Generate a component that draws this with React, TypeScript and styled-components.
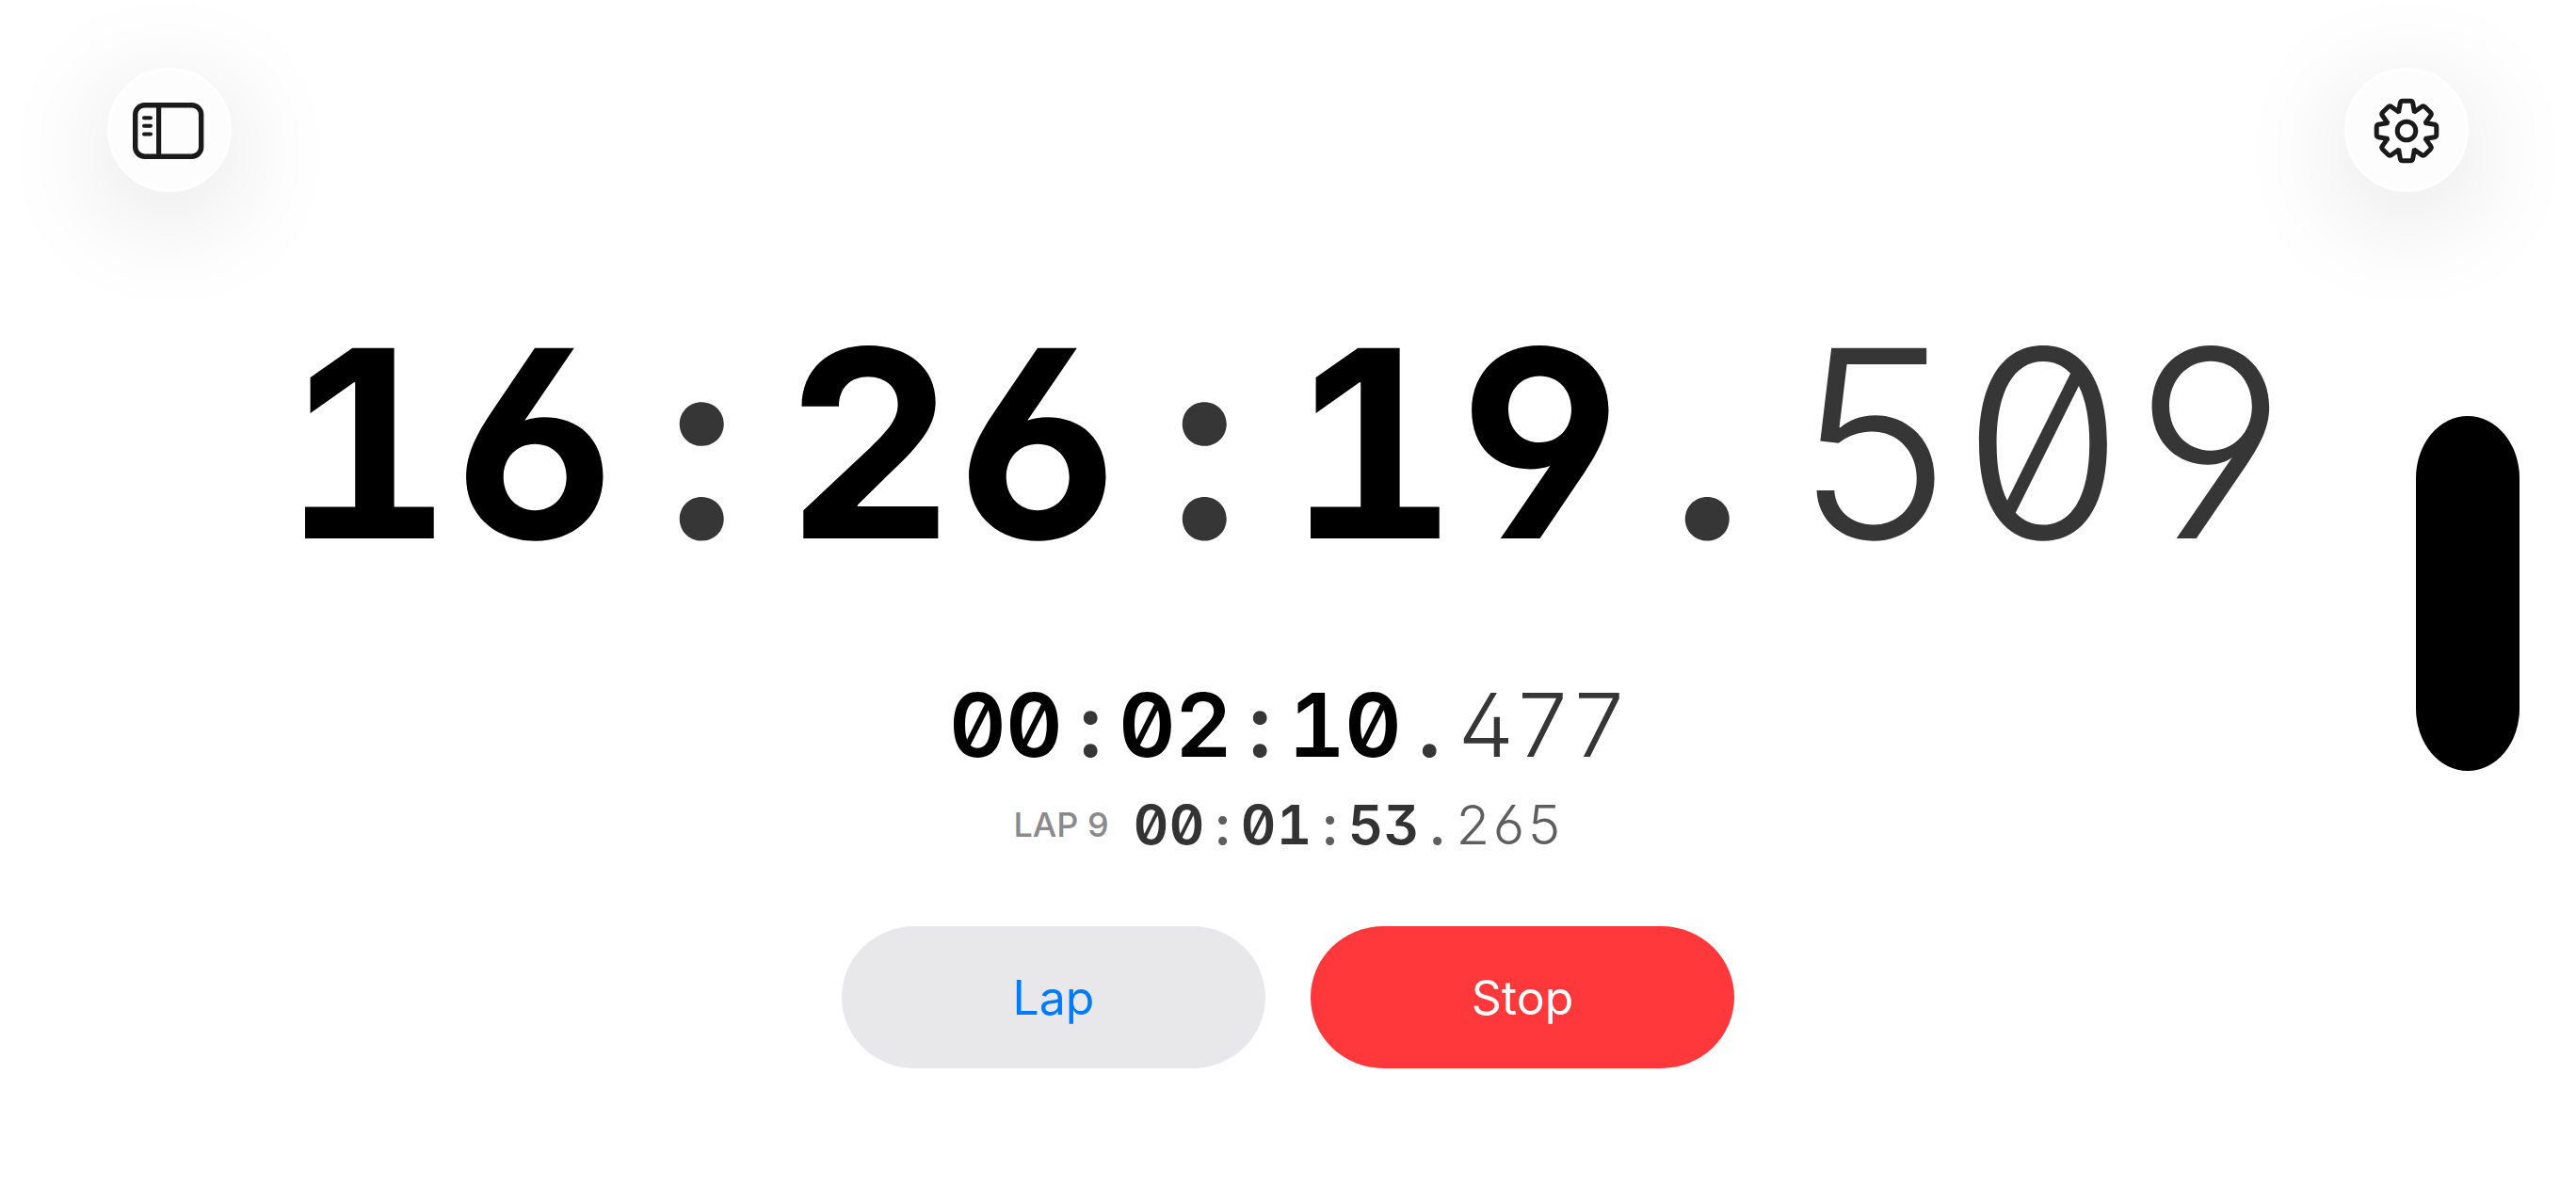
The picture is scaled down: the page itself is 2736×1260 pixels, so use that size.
import React from "react";
import styled, { createGlobalStyle } from "styled-components";

const GlobalStyle = createGlobalStyle`
  *, *::before, *::after { box-sizing: border-box; }
  body {
    margin: 0;
    background: #ffffff;
    font-family: Inter, "Liberation Sans", sans-serif;
  }
`;

const Page = styled.div`
  position: relative;
  display: flex;
  flex-direction: column;
  min-height: 100vh;
  overflow: hidden;
`;

const Toolbar = styled.header`
  display: flex;
  justify-content: space-between;
  padding: 72px 114px 0;
`;

const RoundButton = styled.button`
  display: flex;
  align-items: center;
  justify-content: center;
  width: 132px;
  height: 132px;
  padding: 0;
  border: 3px solid #ffffff;
  border-radius: 50%;
  background: #fdfdfd;
  color: #1a1a1a;
  box-shadow: 0 24px 120px rgba(0, 0, 0, 0.13);
  cursor: pointer;
`;

const Icon = styled.svg`
  flex: none;
  width: 100px;
  height: 100px;
  fill: none;
  stroke: currentColor;
  stroke-linecap: round;
  stroke-linejoin: round;
`;

const Main = styled.main`
  display: flex;
  flex-direction: column;
  align-items: center;
  padding: 127px 24px 0;
`;

const sizes = {
  large: { cell: 178, font: 278, line: 280, weight: 700 },
  medium: { cell: 60, font: 94, line: 96, weight: 600 },
  small: { cell: 38, font: 58, line: 64, weight: 600 },
};

type Size = keyof typeof sizes;

const Readout = styled.div<{ $size: Size; $color: string }>`
  display: grid;
  grid-auto-flow: column;
  grid-auto-columns: ${(p) => sizes[p.$size].cell}px;
  font-size: ${(p) => sizes[p.$size].font}px;
  line-height: ${(p) => sizes[p.$size].line}px;
  font-weight: ${(p) => sizes[p.$size].weight};
  font-feature-settings: "tnum", "zero", "ss01";
  text-align: center;
  color: ${(p) => p.$color};
`;

const Glyph = styled.span<{ $faint: boolean; $light: boolean; $faintColor: string }>`
  font-weight: ${(p) => (p.$light ? 300 : "inherit")};
  color: ${(p) => (p.$faint ? p.$faintColor : "inherit")};
`;

const Elapsed = styled.section`
  margin-top: 111px;
`;

const LapRow = styled.section`
  display: flex;
  align-items: center;
  gap: 26px;
  margin-top: 26px;
`;

const LapLabel = styled.span`
  font-size: 36px;
  line-height: 64px;
  font-weight: 500;
  color: #8a8a8e;
`;

const Actions = styled.div`
  display: flex;
  gap: 48px;
  margin-top: 76px;
`;

const ActionButton = styled.button<{ $bg: string; $fg: string }>`
  width: 450px;
  height: 151px;
  padding: 0;
  border: 0;
  border-radius: 78px / 76px;
  background: ${(p) => p.$bg};
  color: ${(p) => p.$fg};
  font-family: inherit;
  font-size: 50px;
  line-height: 60px;
  font-weight: 400;
  cursor: pointer;
`;

const CameraIsland = styled.div`
  position: absolute;
  top: 0;
  bottom: 0;
  right: 60px;
  width: 110px;
  height: 377px;
  margin: auto 0;
  border-radius: 55px / 66px;
  background: #000000;
`;

function Time({ value, size, color, faint }: { value: string; size: Size; color: string; faint: string }) {
  const dot = value.indexOf(".");
  return (
    <Readout $size={size} $color={color} role="timer" aria-label={value}>
      {value.split("").map((ch, i) => (
        <Glyph key={i} $light={i > dot} $faint={i > dot || ch === ":" || ch === "."} $faintColor={faint}>
          {ch}
        </Glyph>
      ))}
    </Readout>
  );
}

function SidebarIcon() {
  return (
    <Icon viewBox="0 0 100 100" aria-hidden="true">
      <rect x="13.7" y="23.7" width="70" height="54.5" rx="10" strokeWidth="5.4" />
      <path d="M38.6 24V78" strokeWidth="5.2" strokeLinecap="butt" />
      <path d="M23 37.2h7M23 45.8h7M23 54.4h7" strokeWidth="4" />
    </Icon>
  );
}

function gearPath() {
  const points: string[] = [];
  const tooth = [
    [-8.2, -20.8],
    [-6.7, -29.6],
    [-6.3, -31.8],
    [-4, -31.8],
    [4, -31.8],
    [6.3, -31.8],
    [6.7, -29.6],
    [8.2, -20.8],
  ];
  for (let k = 0; k < 8; k++) {
    const a = (k * Math.PI) / 4;
    const p = tooth.map(([x, y]) => {
      const rx = x * Math.cos(a) - y * Math.sin(a);
      const ry = x * Math.sin(a) + y * Math.cos(a);
      return `${rx.toFixed(2)} ${ry.toFixed(2)}`;
    });
    points.push(`${k === 0 ? "M" : "L"}${p[0]}L${p[1]}Q${p[2]} ${p[3]}L${p[4]}Q${p[5]} ${p[6]}L${p[7]}`);
  }
  return points.join("") + "Z";
}

function GearIcon() {
  return (
    <Icon viewBox="-50 -51 100 100" aria-hidden="true">
      <path d={gearPath()} strokeWidth="5" strokeLinejoin="miter" />
      <circle r="9.8" strokeWidth="5" />
    </Icon>
  );
}

export default function App() {
  return (
    <Page>
      <GlobalStyle />
      <Toolbar>
        <RoundButton type="button" aria-label="Toggle sidebar">
          <SidebarIcon />
        </RoundButton>
        <RoundButton type="button" aria-label="Settings">
          <GearIcon />
        </RoundButton>
      </Toolbar>
      <Main>
        <Time value="16:26:19.509" size="large" color="#000000" faint="#363636" />
        <Elapsed>
          <Time value="00:02:10.477" size="medium" color="#000000" faint="#363636" />
        </Elapsed>
        <LapRow>
          <LapLabel>LAP 9</LapLabel>
          <Time value="00:01:53.265" size="small" color="#333333" faint="#5e5e5e" />
        </LapRow>
        <Actions>
          <ActionButton type="button" $bg="#e8e8ea" $fg="#007aff">
            Lap
          </ActionButton>
          <ActionButton type="button" $bg="#ff383c" $fg="#ffffff">
            Stop
          </ActionButton>
        </Actions>
      </Main>
      <CameraIsland />
    </Page>
  );
}
